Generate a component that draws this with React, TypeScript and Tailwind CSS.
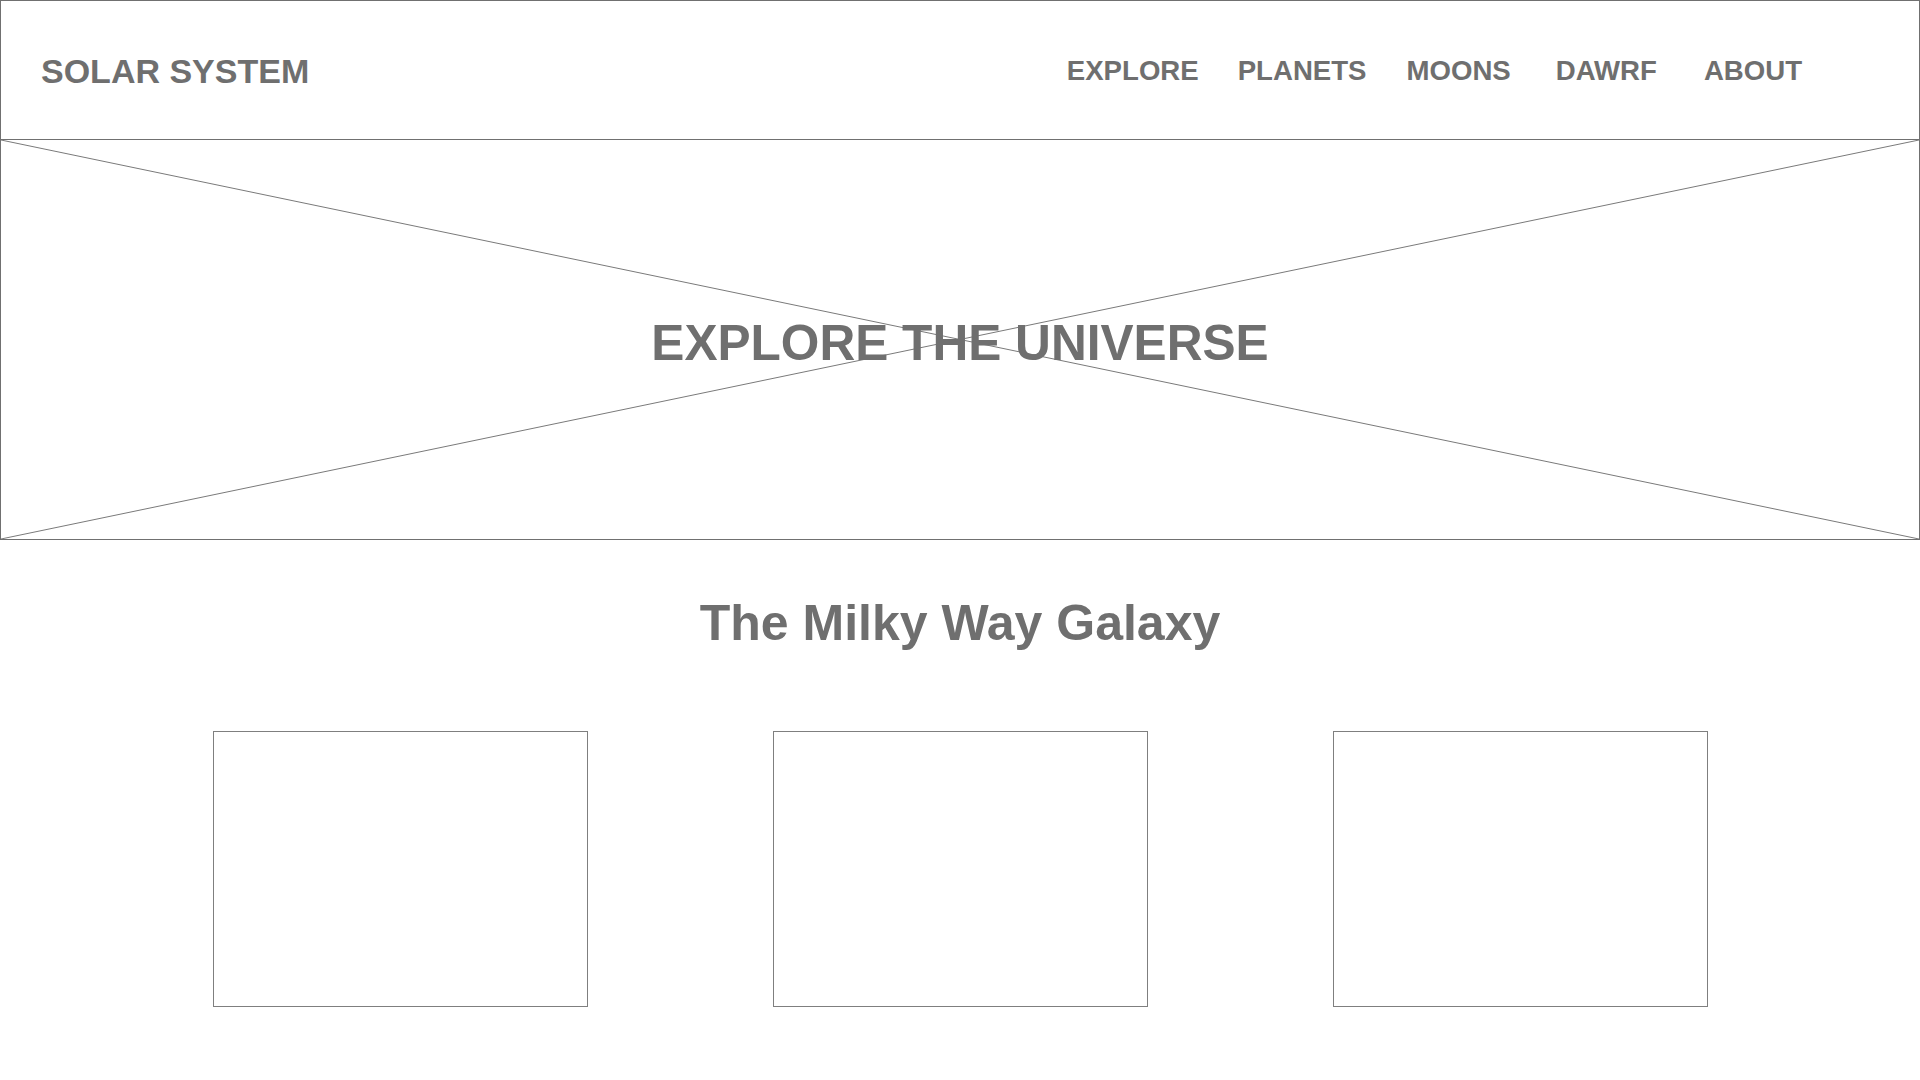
import React from "react";

export default function App() {
  const font = { fontFamily: '"Liberation Sans", Arial, Helvetica, sans-serif' };
  return (
    <div className="w-[1920px] h-[1080px] bg-white text-[#6f6f6f] overflow-hidden" style={font}>
      <header className="h-[140px] border border-[#707070] flex items-center justify-between pl-[40px] pr-[117px] pt-[2px]">
        <div className="text-[34px] font-bold leading-none">SOLAR SYSTEM</div>
        <nav className="flex items-center text-[27.6px] font-bold leading-none">
          <span>EXPLORE</span>
          <span className="ml-[39px]">PLANETS</span>
          <span className="ml-[40px]">MOONS</span>
          <span className="ml-[45px]">DAWRF</span>
          <span className="ml-[47px]">ABOUT</span>
        </nav>
      </header>
      <section className="relative h-[400px] border-x border-b border-[#707070] flex items-center justify-center">
        <svg className="absolute inset-0 w-full h-full" preserveAspectRatio="none" viewBox="0 0 100 100">
          <line x1="0" y1="0" x2="100" y2="100" stroke="#7a7a7a" strokeWidth="1" vectorEffect="non-scaling-stroke" />
          <line x1="0" y1="100" x2="100" y2="0" stroke="#7a7a7a" strokeWidth="1" vectorEffect="non-scaling-stroke" />
        </svg>
        <h1 className="relative text-[49.6px] font-bold leading-none pt-[9px]">EXPLORE THE UNIVERSE</h1>
      </section>
      <h2 className="mt-[58px] text-center text-[50px] font-bold leading-none">The Milky Way Galaxy</h2>
      <div className="mt-[83px] flex justify-center gap-[185px]">
        <div className="w-[375px] h-[276px] border border-[#7f7f7f]" />
        <div className="w-[375px] h-[276px] border border-[#7f7f7f]" />
        <div className="w-[375px] h-[276px] border border-[#7f7f7f]" />
      </div>
    </div>
  );
}
